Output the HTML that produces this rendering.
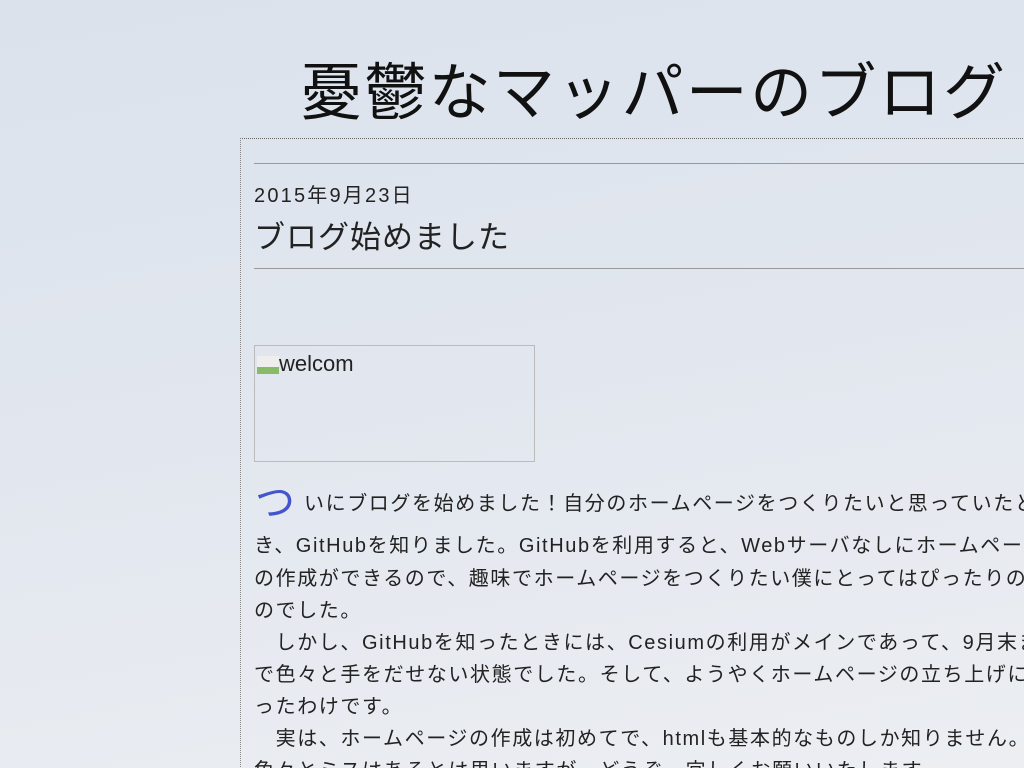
<!DOCTYPE html>
<html><head><meta charset="utf-8"><style>
html,body{margin:0;padding:0;width:1024px;height:768px;overflow:hidden;}
body{background:linear-gradient(170deg,#dbe2ec 0%,#e2e7ef 50%,#eceef2 100%);font-family:"Liberation Sans","Noto Sans CJK JP",sans-serif;color:#222;position:relative;}
.t{position:absolute;white-space:nowrap;}
h1{position:absolute;left:300px;top:57px;margin:0;font-size:62px;font-weight:normal;white-space:nowrap;color:#111;letter-spacing:2.3px;line-height:1.2;}
.box{position:absolute;left:240px;top:138px;width:800px;height:700px;border-left:1px dotted #888;border-top:1px dotted #666;}
.hr{position:absolute;left:254px;width:780px;height:1px;background:#999;}
.img{position:absolute;left:254px;top:345px;width:279px;height:115px;border:1px solid #bbb;}
.p{font-size:20px;left:254px;letter-spacing:1.6px;}
</style></head><body>
<h1>憂鬱なマッパーのブログ</h1>
<div class="box"></div>
<div class="hr" style="top:163px"></div>
<div class="t" style="left:254px;top:179px;font-size:20px;letter-spacing:2.2px;">2015年9月23日</div>
<div class="t" style="left:254px;top:212px;font-size:31px;letter-spacing:1px;">ブログ始めました</div>
<div class="hr" style="top:268px"></div>
<div class="img"><span class="t" style="left:2px;top:5px;font-size:22px;color:#222;"><span style="display:inline-block;width:22px;height:18px;background:linear-gradient(#eee 60%,#8b6 60%);vertical-align:-3px;"></span>welcom</span></div>
<div class="t" style="left:255px;top:470px;font-size:40px;color:#4455cc;">つ</div>
<div class="t p" style="left:304px;top:487px;">いにブログを始めました！自分のホームページをつくりたいと思っていたと</div>
<div class="t p" style="top:529px;">き、GitHubを知りました。GitHubを利用すると、Webサーバなしにホームページ</div>
<div class="t p" style="top:562px;">の作成ができるので、趣味でホームページをつくりたい僕にとってはぴったりのも</div>
<div class="t p" style="top:594px;">のでした。</div>
<div class="t p" style="top:626px;">　しかし、GitHubを知ったときには、Cesiumの利用がメインであって、9月末ま</div>
<div class="t p" style="top:658px;">で色々と手をだせない状態でした。そして、ようやくホームページの立ち上げにい</div>
<div class="t p" style="top:690px;">ったわけです。</div>
<div class="t p" style="top:722px;">　実は、ホームページの作成は初めてで、htmlも基本的なものしか知りません。</div>
<div class="t p" style="top:754px;">色々とミスはあるとは思いますが、どうぞ、宜しくお願いいたします。</div>
</body></html>
